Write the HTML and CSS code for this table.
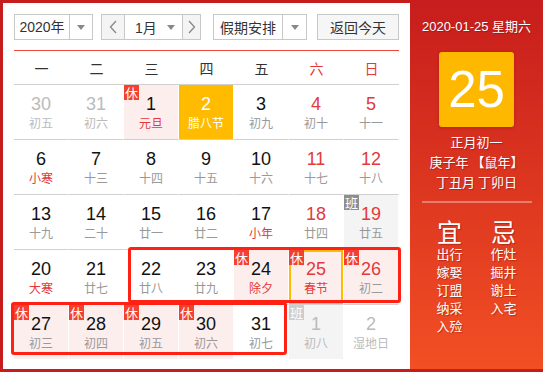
FILE: index.html
```html
<!DOCTYPE html>
<html>
<head>
<meta charset="utf-8">
<link rel="stylesheet" href="styles.css">
</head>
<body>
<div class="cal">
  <div class="main">
    <div class="toolbar">
      <div class="sel sel-year">
        <span class="sel-text">2020年</span>
        <span class="sel-arrow"><i class="tri"></i></span>
      </div>
      <div class="sel sel-month">
        <span class="nav"><svg width="8" height="14" viewBox="0 0 8 14"><path d="M7 1 L1.5 7 L7 13" fill="none" stroke="#888" stroke-width="1.3"/></svg></span>
        <span class="month-mid"><span class="month-text">1月</span><i class="tri"></i></span>
        <span class="nav nav-r"><svg width="8" height="14" viewBox="0 0 8 14"><path d="M1 1 L6.5 7 L1 13" fill="none" stroke="#888" stroke-width="1.3"/></svg></span>
      </div>
      <div class="sel sel-hol">
        <span class="sel-text">假期安排</span>
        <span class="sel-arrow"><i class="tri"></i></span>
      </div>
      <div class="btn">返回今天</div>
    </div>
    <div class="week">
      <span>一</span><span>二</span><span>三</span><span>四</span><span>五</span><span class="we">六</span><span class="we">日</span>
    </div>
    <div class="grid">
      <div class="cell other"><b>30</b><small>初五</small></div>
      <div class="cell other"><b>31</b><small>初六</small></div>
      <div class="cell rest"><em class="tag">休</em><b>1</b><small class="fest">元旦</small></div>
      <div class="cell hl"><b>2</b><small>腊八节</small></div>
      <div class="cell"><b>3</b><small>初九</small></div>
      <div class="cell wkd"><b>4</b><small>初十</small></div>
      <div class="cell wkd"><b>5</b><small>十一</small></div>

      <div class="cell"><b>6</b><small class="fest">小寒</small></div>
      <div class="cell"><b>7</b><small>十三</small></div>
      <div class="cell"><b>8</b><small>十四</small></div>
      <div class="cell"><b>9</b><small>十五</small></div>
      <div class="cell"><b>10</b><small>十六</small></div>
      <div class="cell wkd"><b>11</b><small>十七</small></div>
      <div class="cell wkd"><b>12</b><small>十八</small></div>

      <div class="cell"><b>13</b><small>十九</small></div>
      <div class="cell"><b>14</b><small>二十</small></div>
      <div class="cell"><b>15</b><small>廿一</small></div>
      <div class="cell"><b>16</b><small>廿二</small></div>
      <div class="cell"><b>17</b><small class="fest">小年</small></div>
      <div class="cell wkd"><b>18</b><small>廿四</small></div>
      <div class="cell wkd work"><em class="tag ban">班</em><b>19</b><small>廿五</small></div>

      <div class="cell"><b>20</b><small class="fest">大寒</small></div>
      <div class="cell"><b>21</b><small>廿七</small></div>
      <div class="cell"><b>22</b><small>廿八</small></div>
      <div class="cell"><b>23</b><small>廿九</small></div>
      <div class="cell rest"><em class="tag">休</em><b>24</b><small class="fest">除夕</small></div>
      <div class="cell rest wkd sel-day"><em class="tag">休</em><b>25</b><small class="fest">春节</small></div>
      <div class="cell rest wkd"><em class="tag">休</em><b>26</b><small>初二</small></div>

      <div class="cell rest last"><em class="tag">休</em><b>27</b><small>初三</small></div>
      <div class="cell rest last"><em class="tag">休</em><b>28</b><small>初四</small></div>
      <div class="cell rest last"><em class="tag">休</em><b>29</b><small>初五</small></div>
      <div class="cell rest last"><em class="tag">休</em><b>30</b><small>初六</small></div>
      <div class="cell last"><b>31</b><small>初七</small></div>
      <div class="cell other work last"><em class="tag ban light">班</em><b>1</b><small>初八</small></div>
      <div class="cell other last"><b>2</b><small>湿地日</small></div>

      <div class="mark mark-a"></div>
      <div class="mark mark-b"></div>
    </div>
  </div>
  <div class="side">
    <div class="side-date">2020-01-25 星期六</div>
    <div class="big">25</div>
    <div class="lunar">
      <div>正月初一</div>
      <div>庚子年 【鼠年】</div>
      <div>丁丑月 丁卯日</div>
    </div>
    <div class="divider"></div>
    <div class="yiji">
      <div class="col">
        <div class="head">宜</div>
        <div>出行</div><div>嫁娶</div><div>订盟</div><div>纳采</div><div>入殓</div>
      </div>
      <div class="col">
        <div class="head">忌</div>
        <div>作灶</div><div>掘井</div><div>谢土</div><div>入宅</div>
      </div>
    </div>
  </div>
</div>
</body>
</html>
```

FILE: styles.css
```css
* { box-sizing: border-box; }
html, body { margin: 0; padding: 0; background: #fff; }
body {
  font-family: "Liberation Sans", Arial, "Noto Sans CJK SC", sans-serif;
  width: 543px;
  height: 375px;
  overflow: hidden;
}
.cal {
  display: flex;
  width: 546px;
  height: 372px;
  border: 3px solid #c71c1c;
  border-right: none;
}
.main {
  width: 407px;
  flex: none;
  padding: 11px 11px 0 11px;
}
.toolbar {
  display: flex;
  align-items: stretch;
  height: 37px;
  padding-bottom: 10px;
  border-bottom: 1px solid #f0483c;
  font-size: 14px;
  color: #333;
}
.sel, .btn {
  height: 26px;
  border: 1px solid #c8c8c8;
  display: flex;
  align-items: stretch;
  background: #fff;
}
.sel-year { width: 79px; margin-right: 8px; }
.sel-year .sel-text { width: 55px; }
.sel-text {
  display: flex;
  align-items: center;
  justify-content: center;
  border-right: 1px solid #c8c8c8;
  font-family: "Noto Sans CJK SC", sans-serif;
  line-height: 1;
}
.sel-year .sel-text { font-family: "Liberation Sans", "Noto Sans CJK SC", sans-serif; }
.sel-arrow {
  flex: 1;
  display: flex;
  align-items: center;
  justify-content: center;
}
.tri {
  display: block;
  width: 0;
  height: 0;
  border-left: 4px solid transparent;
  border-right: 4px solid transparent;
  border-top: 5px solid #888;
}
.sel-month { width: 100px; margin-right: 12px; }
.nav {
  width: 23px;
  background: #f4f4f4;
  display: flex;
  align-items: center;
  justify-content: center;
  border-right: 1px solid #c8c8c8;
}
.nav-r {
  width: 18px;
  border-right: none;
  border-left: 1px solid #c8c8c8;
}
.month-mid {
  flex: 1;
  display: flex;
  align-items: center;
  justify-content: space-between;
  padding: 0 7px 0 10px;
}
.month-text { font-family: "Liberation Sans", "Noto Sans CJK SC", sans-serif; }
.sel-hol { width: 94px; margin-right: 10px; }
.sel-hol .sel-text { width: 69px; }
.btn {
  width: 82px;
  background: #f6f6f6;
  align-items: center;
  justify-content: center;
  font-family: "Noto Sans CJK SC", sans-serif;
}
.week {
  display: grid;
  grid-template-columns: repeat(7, 55px);
  height: 34px;
  border-bottom: 1px solid #d0d0d0;
  font-family: "Noto Sans CJK SC", sans-serif;
  font-size: 14px;
  color: #333;
}
.week span {
  display: flex;
  align-items: center;
  justify-content: center;
}
.week .we { color: #e4393c; }
.grid {
  position: relative;
  display: grid;
  grid-template-columns: repeat(7, 55px);
  grid-auto-rows: 55px;
}
.cell {
  position: relative;
  display: flex;
  flex-direction: column;
  align-items: center;
  justify-content: center;
  border-right: 1px solid #fff;
  border-bottom: 1px solid #d0d0d0;
  background-clip: padding-box;
}
.cell.last { border-bottom-color: transparent; }
.cell b {
  font-weight: normal;
  font-size: 18px;
  line-height: 21px;
  color: #111;
}
.cell small {
  font-family: "Noto Sans CJK SC", sans-serif;
  font-size: 12px;
  line-height: 16px;
  color: #999;
}
.cell .fest { color: #e4393c; }
.cell.wkd b { color: #e4393c; }
.cell.other b, .cell.other small { color: #bbb; }
.cell.rest { background-color: #fdeeee; }
.cell.work { background-color: #f4f4f4; }
.cell.hl { background-color: #ffbb00; }
.cell.hl b, .cell.hl small { color: #fff; }
.cell.sel-day { box-shadow: inset 0 0 0 2px #ffbb00; }
.tag {
  position: absolute;
  left: 0;
  top: 0;
  width: 15px;
  height: 15px;
  background: #f2412f;
  color: #fff;
  font-style: normal;
  font-family: "Noto Sans CJK SC", sans-serif;
  font-size: 13px;
  line-height: 15px;
  text-align: center;
}
.tag.ban { background: #8e8e8e; }
.tag.ban.light { background: #cdcdcd; }
.mark {
  position: absolute;
  border: 3px solid #ff2214;
  border-radius: 3px;
  pointer-events: none;
}
.mark-a { left: 114px; top: 162px; width: 273px; height: 56px; }
.mark-b { left: -3px; top: 217px; width: 276px; height: 53px; }

.side {
  width: 136px;
  flex: none;
  margin-top: -3px;
  margin-bottom: 0;
  height: 369px;
  background: linear-gradient(to bottom, #c71d1c 0%, #f24f24 100%);
  color: #fff;
  display: flex;
  flex-direction: column;
  align-items: center;
  font-family: "Liberation Sans", "Noto Sans CJK SC", sans-serif;
  text-shadow: 1px 1px 1px rgba(90, 0, 0, 0.35);
  padding-right: 3px;
}
.side-date {
  margin-top: 18px;
  font-size: 13px;
  line-height: 18px;
}
.big {
  margin-top: 16px;
  width: 75px;
  height: 75px;
  background: #ffb800;
  border-radius: 3px;
  box-shadow: 0 1px 3px rgba(120, 30, 0, 0.4);
  font-size: 51px;
  line-height: 75px;
  text-align: center;
  text-shadow: none;
}
.lunar {
  margin-top: 5px;
  font-family: "Noto Sans CJK SC", sans-serif;
  font-size: 13px;
  line-height: 20px;
  text-align: center;
}
.divider {
  margin-top: 9px;
  width: 110px;
  height: 2px;
  background: rgba(255, 255, 255, 0.35);
}
.yiji {
  display: flex;
  margin-top: 15px;
  font-family: "Liberation Sans", "Noto Sans CJK SC", sans-serif;
  font-size: 13px;
  line-height: 18px;
}
.col {
  width: 54px;
  text-align: center;
}
.col .head {
  font-size: 25px;
  line-height: 26px;
  height: 26px;
  margin-top: 2px;
  margin-bottom: 0;
}
```
